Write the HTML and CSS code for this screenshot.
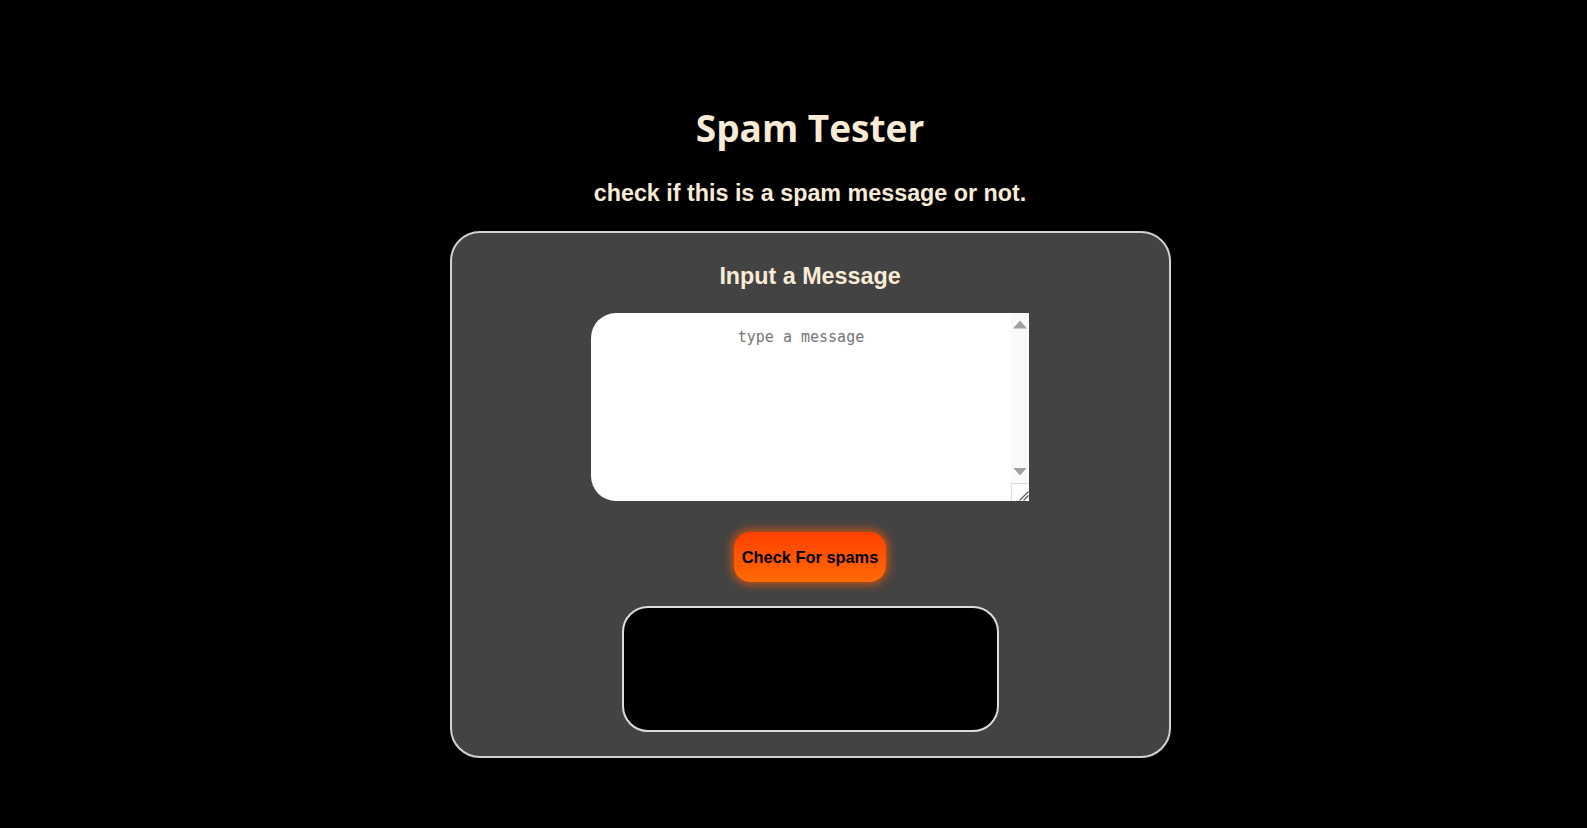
FILE: index.html
```html
<!DOCTYPE html>
<html lang="en">
<head>
<meta charset="utf-8">
<title>Spam Tester</title>
<link rel="stylesheet" href="styles.css">
</head>
<body>
<main class="page">
  <h1 class="title">Spam Tester</h1>
  <h2 class="subtitle">check if this is a spam message or not.</h2>
  <section class="card">
    <h2 class="card-heading">Input a Message</h2>
    <div class="input-box">
      <textarea class="message" placeholder="type a message"></textarea>
      <div class="scrollbar" aria-hidden="true">
        <span class="scroll-arrow up"></span>
        <span class="scroll-track"></span>
        <span class="scroll-arrow down"></span>
        <span class="resizer">
          <svg width="18" height="18" viewBox="0 0 18 18">
            <path d="M8.5 17.5 L17.5 8.5 M12.5 17.5 L17.5 12.5" stroke="#5a5a5a" stroke-width="1.2" fill="none"/>
          </svg>
        </span>
      </div>
    </div>
    <button class="check-btn" type="button">Check For spams</button>
    <div class="result"></div>
  </section>
</main>
</body>
</html>
```
FILE: styles.css
```css
html, body {
  margin: 0;
  padding: 0;
  background: #000;
}

.page {
  display: flex;
  flex-direction: column;
  align-items: center;
  margin-left: 33px;
  padding-top: 104px;
}

.title {
  margin: 0;
  font-family: "Open Sans", "Noto Sans", sans-serif;
  font-weight: 700;
  font-size: 37px;
  line-height: 48px;
  color: #faebd7;
}

.subtitle {
  margin: 27px 0 0;
  font-family: "Liberation Sans", Arial, sans-serif;
  font-weight: 700;
  font-size: 23.3px;
  line-height: 28px;
  color: #faebd7;
}

.card {
  margin-top: 24px;
  width: 717px;
  box-sizing: content-box;
  background: #434343;
  border: 2px solid #d2d2d2;
  border-radius: 30px;
  padding: 29px 0 24px;
  display: flex;
  flex-direction: column;
  align-items: center;
}

.card-heading {
  margin: 0;
  font-family: "Liberation Sans", Arial, sans-serif;
  font-weight: 700;
  font-size: 23.3px;
  line-height: 28px;
  color: #faebd7;
}

.input-box {
  margin-top: 23px;
  width: 438px;
  height: 188px;
  display: flex;
}

.message {
  flex: 1;
  min-width: 0;
  height: 100%;
  box-sizing: border-box;
  border: none;
  outline: none;
  border-radius: 25px 0 0 25px;
  padding: 15px 14px 12px;
  background: #fff;
  overflow: hidden;
  resize: none;
  text-align: center;
  font-family: "DejaVu Sans Mono", "Liberation Mono", monospace;
  font-size: 15px;
  line-height: 18px;
  color: #222;
}

.message::placeholder {
  color: #767676;
}

.scrollbar {
  width: 18px;
  flex: none;
  display: flex;
  flex-direction: column;
  background: #f9f9f9;
}

.scroll-arrow {
  height: 23px;
  flex: none;
  display: flex;
  align-items: center;
  justify-content: center;
}

.scroll-arrow::before {
  content: "";
  flex: none;
  width: 14px;
  height: 8px;
  background: #a0a0a0;
}

.scroll-arrow.up::before {
  clip-path: polygon(50% 0, 100% 100%, 0 100%);
}

.scroll-arrow.down::before {
  clip-path: polygon(0 0, 100% 0, 50% 100%);
}

.scroll-track {
  flex: 1;
}

.resizer {
  height: 18px;
  flex: none;
  box-sizing: border-box;
  background: #fff;
  border-top: 1px solid #dcdcdc;
  border-left: 1px solid #dcdcdc;
  display: flex;
  align-items: flex-end;
  justify-content: flex-end;
  overflow: hidden;
}

.resizer svg {
  display: block;
  flex: none;
}

.check-btn {
  margin-top: 31px;
  width: 152px;
  height: 50px;
  border: none;
  border-radius: 16px;
  background: linear-gradient(#ff4000, #ff6a00);
  box-shadow: 0 0 10px 2px rgba(255, 90, 0, 0.75);
  font-family: "Liberation Sans", Arial, sans-serif;
  font-weight: 700;
  font-size: 16.4px;
  color: #000;
  padding: 0;
  cursor: pointer;
}

.result {
  margin-top: 24px;
  width: 377px;
  height: 126px;
  box-sizing: border-box;
  background: #000;
  border: 2px solid #dcdcdc;
  border-radius: 26px;
}
```
